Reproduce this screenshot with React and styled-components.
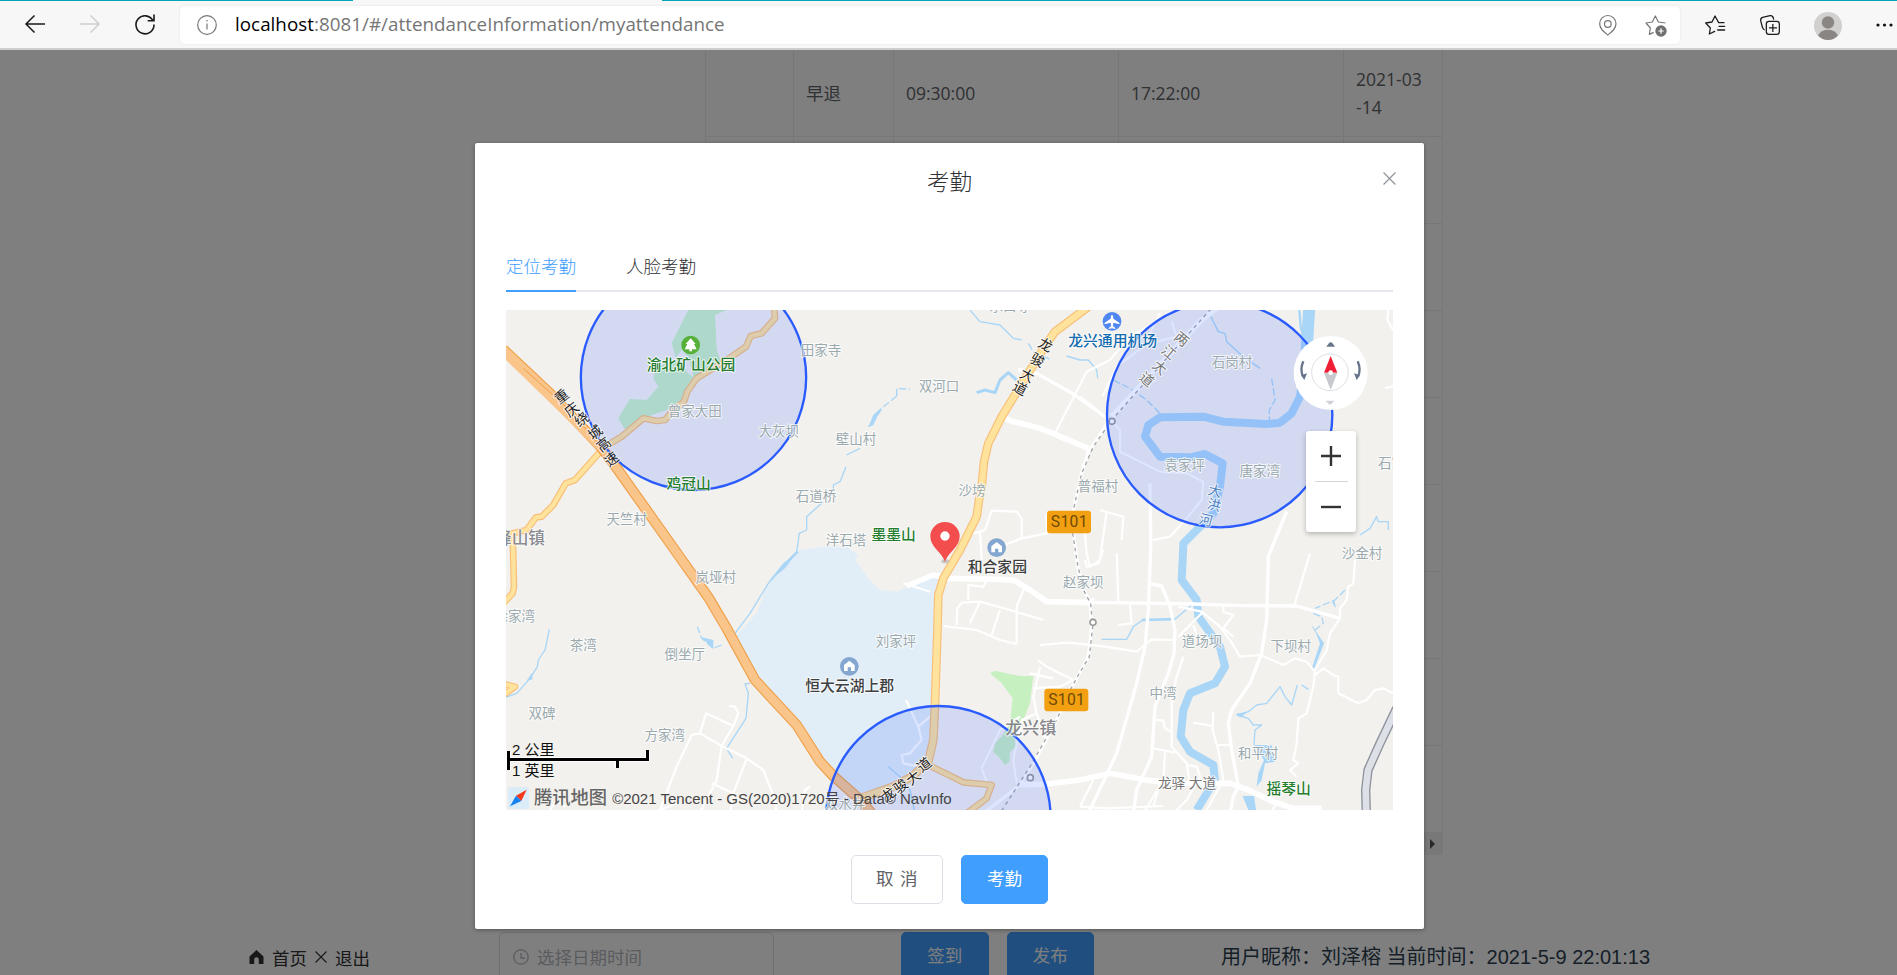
import React from "react";
import styled, { createGlobalStyle } from "styled-components";

const cjk = `"Noto Sans CJK SC", sans-serif`;
const ui = `"Open Sans", ${cjk}`;

const GlobalStyle = createGlobalStyle`
  * { box-sizing: border-box; }
  body { margin: 0; overflow: hidden; background: #fff; font-family: ${ui}; }
`;

const Window = styled.div`
  width: 100vw;
  height: 100vh;
  display: flex;
  flex-direction: column;
  overflow: hidden;
`;

/* ---------- browser bar ---------- */

const TabStrip = styled.div`
  height: 1px;
  display: flex;
  background: #00a5b5;
`;
const ActiveTab = styled.div`
  width: 309px;
  margin-left: 353px;
  background: #f7f7f7;
`;
const BrowserBar = styled.div`
  height: 49px;
  flex: none;
  display: flex;
  align-items: flex-start;
  padding: 5px 0 0 25px;
  background: #f7f7f7;
  border-bottom: 2px solid #cfcfcf;
`;
const BarIcon = styled.svg`
  flex: none;
  width: ${(p) => p.$w}px;
  height: ${(p) => p.$h}px;
  margin: ${(p) => p.$top}px ${(p) => p.$right || 0}px 0 ${(p) => p.$left || 0}px;
  fill: none;
  stroke: ${(p) => p.$color || "#1b1b1b"};
  overflow: visible;
`;
const AddressBar = styled.div`
  width: 1500px;
  height: 38px;
  flex: none;
  margin-left: 25px;
  padding-left: 17px;
  display: flex;
  background: #fff;
  border-radius: 5px;
  box-shadow: 0 0 3px rgba(0, 0, 0, 0.08);
`;
const Url = styled.div`
  flex: 1;
  margin-left: 18px;
  font-size: 18.8px;
  line-height: 37px;
  letter-spacing: 0.03px;
  color: #757575;
  white-space: nowrap;
  b { font-weight: 400; color: #000; }
`;

/* ---------- page behind the dialog ---------- */

const Page = styled.main`
  flex: 1;
  position: relative;
  overflow: hidden;
`;
const Table = styled.div`
  width: 738px;
  height: 804px;
  margin-left: 705px;
  color: #606266;
  border-left: 1px solid #ebeef5;
`;
const Row = styled.div`
  height: 87px;
  display: grid;
  grid-template-columns: 88px 100px 225px 225px 99px;
  border-bottom: 1px solid #ebeef5;
`;
const Cell = styled.div`
  display: flex;
  align-items: center;
  padding: 0 12px;
  font-size: 17.5px;
  line-height: 28px;
  border-right: 1px solid #ebeef5;
`;
const ScrollTrack = styled.div`
  height: 22px;
  display: flex;
  align-items: center;
  justify-content: flex-end;
  padding-right: 8px;
  background: #f1f1f1;
`;
const ScrollArrow = styled.i`
  border: 5px solid transparent;
  border-left-color: #505050;
  border-right: 0;
`;
const Footer = styled.div`
  height: 52px;
  margin-top: 78px;
  padding-left: 249px;
  display: flex;
  align-items: flex-start;
`;
const FooterNav = styled.nav`
  width: 250px;
  height: 50px;
  display: flex;
  align-items: center;
  font-size: 17.5px;
  color: #303133;
  svg { margin-right: 8px; }
  span { margin-right: 8px; }
`;
const DateInput = styled.div`
  width: 275px;
  height: 49px;
  display: flex;
  align-items: center;
  gap: 8px;
  padding-left: 13px;
  border: 1px solid #dcdfe6;
  border-radius: 5px;
  font-size: 17.5px;
  color: #b4b8bf;
`;
const Button = styled.button`
  width: ${(p) => p.$w || 87.5}px;
  height: 49px;
  margin: 0 0 0 ${(p) => p.$gap || 0}px;
  padding: 0 0 1px;
  border: 1px solid ${(p) => (p.$plain ? "#dcdfe6" : "#409eff")};
  border-radius: 5px;
  background: ${(p) => (p.$plain ? "#fff" : "#409eff")};
  color: ${(p) => (p.$plain ? "#606266" : "#fff")};
  font: 17.5px/1 ${ui};
  word-spacing: 2px;
`;
const UserInfo = styled.div`
  margin-left: 127px;
  line-height: 51px;
  font-family: "Liberation Sans", ${cjk};
  font-size: 20px;
  color: #2c3e50;
  white-space: nowrap;
`;
const Overlay = styled.div`
  position: absolute;
  inset: 0;
  display: flex;
  justify-content: center;
  align-items: flex-start;
  padding: 93px 0 0 2px;
  background: rgba(0, 0, 0, 0.5);
`;

/* ---------- dialog ---------- */

const Dialog = styled.section`
  width: 949px;
  height: 786px;
  padding: 0 31px;
  display: flex;
  flex-direction: column;
  background: #fff;
  border-radius: 2px;
  box-shadow: 0 1px 4px rgba(0, 0, 0, 0.35);
`;
const DialogHead = styled.header`
  height: 95px;
  flex: none;
  display: grid;
  grid-template-columns: 1fr auto 1fr;
  padding-top: 25px;
  font-size: 22.5px;
  font-weight: 300;
  line-height: 28px;
  color: #303133;
  svg { justify-self: end; margin: 4px -3px 0 0; }
`;
const Tabs = styled.div`
  height: 54px;
  flex: none;
  display: flex;
  gap: 50px;
  border-bottom: 2px solid #e4e7ed;
`;
const Tab = styled.div`
  height: 54px;
  font-size: 17.5px;
  font-weight: 300;
  line-height: 56px;
  color: ${(p) => (p.$active ? "#409eff" : "#303133")};
  border-bottom: 2px solid ${(p) => (p.$active ? "#409eff" : "transparent")};
`;
const DialogFoot = styled.footer`
  display: flex;
  justify-content: center;
  padding-top: 45px;
`;

/* ---------- map ---------- */

const MapBox = styled.div`
  position: relative;
  width: 887px;
  height: 500px;
  flex: none;
  margin-top: 18px;
  overflow: hidden;
  background: #f2f1ed;
`;
const MapSvg = styled.svg`
  display: block;
  width: 887px;
  height: 500px;
  text { font-family: "Open Sans", ${cjk}; }
`;
const SignText = styled.text`
  && { font-family: Roboto, "Liberation Sans", sans-serif; }
`;
const Compass = styled.svg`
  position: absolute;
  left: 787px;
  top: 25px;
  width: 76px;
  height: 76px;
`;
const ZoomControl = styled.div`
  position: absolute;
  left: 800px;
  top: 121px;
  width: 50px;
  height: 101px;
  padding: 0 8px;
  display: flex;
  flex-direction: column;
  align-items: center;
  background: #fff;
  border-radius: 3px;
  box-shadow: 0 2px 5px rgba(0, 0, 0, 0.25);
  svg { height: 50px; width: 20px; stroke: #333; stroke-width: 2.4; }
  hr { width: 33px; margin: 0; border: 0; border-top: 1px solid #d5d5d5; }
`;
const ScaleBar = styled.div`
  position: absolute;
  left: 0;
  top: 429px;
  width: 144px;
  font: 15px/21px "Liberation Sans", ${cjk};
  color: #111;
  span { display: block; height: 21px; padding-left: 6px; }
  svg { position: absolute; left: 0; top: 10px; }
`;
const MapCredit = styled.div`
  position: absolute;
  left: 2px;
  bottom: 0;
  height: 25px;
  display: flex;
  align-items: center;
  font: 15px "Liberation Sans", ${cjk};
  color: #444;
  white-space: nowrap;
  b { margin: 0 5px; font-weight: 500; font-size: 18.3px; line-height: 24px; color: #666; }
`;

const places = [
  [584, 334, "曾家大田"], [836, 394, "大灰坝"], [380, 657, "天竺村"], [948, 590, "石道桥"],
  [963, 151, "田家寺"], [1317, 260, "双河口"], [1068, 417, "壁山村"], [1416, 571, "沙塝"],
  [1038, 720, "洋石塔"], [1794, 560, "普福村"], [2196, 188, "石岗村"], [2054, 497, "袁家坪"],
  [2279, 514, "唐家湾"], [2586, 759, "沙金村"], [1529, 18, "水口寺"], [647, 833, "岚垭村"],
  [44, 950, "徐家湾"], [250, 1036, "茶湾"], [554, 1062, "倒坐厅"], [126, 1240, "双碑"],
  [494, 1306, "方家湾"], [1188, 1025, "刘家坪"], [1750, 848, "赵家坝"], [2106, 1024, "道场坝"],
  [2372, 1040, "下坝村"], [1989, 1181, "中湾"], [2274, 1359, "和平村"], [2695, 490, "石家坡"],
  [1035, 1512, "双水井"],
];
const hills = [
  [573, 194, "渝北矿山公园"], [566, 551, "鸡冠山"], [1181, 704, "墨墨山"], [2366, 1465, "摇琴山"],
];
const estates = [[1049, 1158, "恒大云湖上郡"], [1492, 801, "和合家园"]];
const estatePins = [[1048, 1099], [1490, 743]];
const signs = [[1641, 632], [1633, 1166]];

const roadNames = [
  { angle: -38, color: "#222", size: 42, chars: [["重", 185, 289], ["庆", 215, 328], ["绕", 245, 357], ["城", 285, 397], ["高", 311, 433], ["速", 334, 477]] },
  { angle: 28, color: "#222", size: 42, chars: [["龙", 1637, 134], ["骏", 1613, 180], ["大", 1582, 226], ["道", 1560, 265]] },
  { angle: 40, color: "#777", size: 42, chars: [["两", 2045, 117], ["江", 2007, 157], ["大", 1980, 202], ["道", 1941, 238]] },
  { angle: -38, color: "#222", size: 42, chars: [["龙", 1165, 1483], ["骏", 1202, 1458], ["大", 1240, 1433], ["道", 1272, 1394]] },
  { angle: 14, color: "#4d7fc0", size: 41, chars: [["大", 2145, 572], ["洪", 2142, 614], ["河", 2118, 659]] },
];

const wideRoads = [
  "M1500,345 L1530,362 L1620,385 L1665,403 L1765,445",
  "M1220,858 L1300,825 L1340,835 L1500,838 L1545,842 L1590,870 L1640,905 L1780,908",
  "M1560,1455 L1640,1452 L1740,1440 L1830,1420 L1950,1442 L2060,1450 L2190,1450 L2245,1470 L2320,1505 L2380,1525 L2465,1525",
];
const midRoads = [
  "M1555,208 L1610,220 L1720,282 L1815,350",
  "M1780,895 L1775,908 L1840,908 L2080,912 L2200,916 L2390,918 L2520,955",
  "M1830,355 L1790,420 L1765,455 L1745,520 L1720,630 L1720,700 L1732,790 L1745,860 L1770,905 L1775,980 L1765,1070 L1735,1125 L1700,1190 L1670,1260 L1600,1390 L1560,1455 L1450,1540",
  "M1950,550 L1952,700 L1952,750 L1945,930 L1935,1040 L1910,1150 L1850,1360 L1765,1540",
  "M1945,850 L1985,858 L2010,920 L2025,990 L2022,1060 L2005,1120 L1965,1220 L1955,1370 L1910,1470 L1900,1540",
  "M2360,635 L2325,720 L2305,770 L2300,960 L2285,1060 L2250,1150 L2195,1230 L2185,1270 L2195,1350 L2215,1460 L2200,1490 L2190,1540",
];
const smallRoads = [
  "M1665,400 L1760,215 L1830,180 L1890,110 L1960,70",
  "M1808,288 L1850,200 L1930,140 L1980,40",
  "M1740,290 L1830,360 L1860,390 L1860,455 L1980,515 L2060,520 L2110,545 L2105,600 L2060,655 L2010,710 L1960,720",
  "M2015,65 L2030,110 L1950,130",
  "M1800,630 L1870,650 L1865,720 M1820,635 L1800,780 L1770,800 L1760,760 L1750,640",
  "M1440,695 L1455,690 L1475,632 L1550,635 L1565,655 L1565,715 L1500,740 M1565,715 L1640,700 L1640,640",
  "M1445,780 L1440,695 L1420,700",
  "M1330,978 L1430,990 L1500,1020 L1550,1032 M1370,975 L1372,925 L1385,908 L1440,905 L1530,930 L1630,960 M1440,905 L1410,970 M1500,930 L1475,1005 M1550,1030 L1550,920 L1575,860 M1405,900 L1405,855 L1450,860 L1465,830",
  "M1210,850 L1290,875 M1240,850 L1320,820",
  "M1620,1035 L1700,1028 L1780,1035 L1830,1042 L1910,1055 M1910,1055 L1955,1018 L2025,1020",
  "M1613,1080 L1640,1100 L1720,1140 M1620,1100 L1600,1190 L1610,1240 L1640,1330 M1590,1120 L1660,1135 M1600,1165 L1680,1160 L1720,1140",
  "M1610,1240 L1565,1260 L1540,1380 L1550,1450 M1445,1405 L1500,1290 L1560,1250 M1445,1405 L1460,1445",
  "M1218,1200 L1255,1280 L1290,1250 M1255,1280 L1265,1320 L1230,1360 L1205,1365 L1210,1390 L1260,1400",
  "M530,1510 L480,1530 L530,1400 L575,1305 L600,1300 L665,1338 L740,1375 L790,1410 L825,1500 L830,1540 M600,1300 L618,1240 L700,1278 L665,1338 L650,1440 L600,1540 M700,1278 L715,1240 L705,1220 L688,1218 M635,1450 L700,1480 L740,1375 M700,1480 L690,1540",
  "M150,1530 L170,1500 L195,1520 M905,1540 L915,1470 L930,1460",
  "M1850,760 L1855,905 M1890,910 L1895,970 L1855,975 M1755,780 L1760,800 L1795,790 L1810,750",
  "M2035,920 L2105,935 L2160,980 L2200,1035 M2035,1010 L2105,940 M2170,915 L2170,935 L2200,945 L2170,985 L2200,1010 M2080,975 L2090,1005",
  "M2190,1020 L2220,1070 L2280,1065 L2350,1095 L2385,1075 L2420,1085 L2445,1115",
  "M2430,760 L2380,925 M2565,780 L2560,850 L2545,860 L2540,900 L2520,925 L2520,955 L2490,1000 L2480,1050 L2445,1110 L2440,1160 L2420,1240 L2395,1255 L2390,1330 L2380,1380 L2395,1390 L2370,1410 L2390,1430",
  "M2445,1125 L2470,1105 L2500,1125 L2515,1130 L2515,1180 L2575,1210 L2600,1200 L2625,1170 L2650,1165 L2679,1180",
  "M2050,1070 L2030,1130 L2015,1200 L2015,1340 L2060,1390 L2070,1450 M1960,1345 L2025,1358 M1960,1258 L1990,1262 L1995,1285 L2015,1295 M1995,1358 L1990,1440 L1930,1540",
  "M2140,1235 L2138,1290 L2155,1350 L2170,1440 L2120,1530 M2080,1268 L2138,1278 M2155,1335 L2195,1335 M2060,1395 L2090,1400 L2100,1430 L2060,1500 L2020,1540",
  "M1740,1520 L1820,1525 L1990,1518 M1980,1450 L1960,1520 M2330,1510 L2310,1540",
  "M2665,30 L2662,60 L2679,90 M2655,265 L2679,258 M1780,1440 L1740,1520",
];
const streams = [
  "M1410,30 L1440,65 L1500,75 L1540,115 L1565,120", "M1585,130 L1600,155 L1650,178",
  "M1700,168 L1740,180 L1765,180 L1790,210 L1793,235",
  "M1190,288 L1190,265 L1230,268", "M1190,288 L1145,325 L1130,350 L1105,380",
  "M1080,445 L1040,465 M1038,500 L1020,545 L1000,555 L1000,570", "M970,605 L920,650 L920,690 L898,700 L890,755 L865,780",
  "M1840,240 L1890,265 L1940,300 L1985,345", "M2130,45 L2155,95 L2175,100 L2180,125 L2230,170 L2280,205",
  "M2315,235 L2325,300 L2308,330 L2308,360", "M895,755 L850,800 L805,850 L750,940 L705,1000",
  "M148,988 L135,1050 L115,1080 L112,1100 L90,1135 L50,1180 L18,1192",
  "M665,1035 L640,1045 L605,1015 L592,980", "M750,1150 L735,1152 L745,1180 L738,1255 L680,1345 L698,1375",
  "M1805,1018 L1880,1018 L1900,980 L1925,962 L2025,958 L2075,915",
  "M2440,940 L2465,950 L2470,970 L2445,990", "M2535,870 L2505,900 L2445,925",
  "M2210,1245 L2245,1235 L2270,1215 L2300,1210 L2340,1160 L2355,1190 L2375,1215 L2392,1155 M2405,1155 L2425,1168",
  "M2210,1245 L2245,1255 L2260,1275 L2285,1275 L2265,1290 L2262,1335",
  "M2580,705 L2610,685 L2630,650 L2635,665 L2665,665 L2665,690", "M2500,900 L2505,920 M1165,1400 L1200,1430 L1230,1470 L1245,1540",
];
const lanes = [
  "M822,20 L825,55 L785,100 L752,108 L738,140 L680,180 L590,235 L562,275 L552,305 L520,330 L495,360 L470,363 L430,355 L365,410 L320,437",
  "M305,450 L225,540 L197,550 L160,615 L125,650 L108,652 L80,690 L10,707",
  "M38,700 L42,860 L38,880 L10,910",
  "M10,1152 L45,1160 L10,1185",
  "M1285,1395 L1390,1447 L1475,1455 L1460,1495 L1400,1540",
];
const mainRoad =
  "M1765,20 L1665,95 L1635,138 L1560,260 L1505,350 L1465,430 L1452,485 L1445,560 L1437,600 L1430,650 L1380,750 L1330,835 L1315,885 L1312,1000 L1305,1210 L1300,1320 L1285,1385 L1235,1430 L1180,1460 L1080,1495";
const highway =
  "M10,148 L150,280 L300,438 L340,490 L535,765 L625,892 L680,985 L765,1140 L890,1275 L960,1385 L1000,1428 L1070,1490 L1115,1540";
const river =
  "M2420,140 L2400,290 L2375,340 L2340,368 L2300,372 L2170,365 L2110,350 L1980,352 L1945,375 L1935,410 L1980,470 L2070,472 L2115,462 L2168,490 L2160,560 L2140,640 L2050,730 L2048,780 L2045,840 L2090,900 L2095,950 L2160,1040 L2175,1100 L2145,1150 L2070,1180 L2050,1230 L2042,1310 L2070,1355 L2140,1395 L2145,1440 L2090,1530";

const Label = ({ x, y, size = 40.5, color = "#9aa9ae", weight = 400, turn, children }) => (
  <text
    x={x} y={y + size * 0.37} fontSize={size} fontWeight={weight} fill={color} textAnchor="middle"
    stroke="#fff" strokeOpacity=".75" strokeWidth="6" strokeLinejoin="round" paintOrder="stroke"
    transform={turn ? `rotate(${turn} ${x} ${y})` : undefined}
  >
    {children}
  </text>
);

const Cased = ({ d, width, fill, edge }) => (
  <>
    <path d={d} stroke={edge} strokeWidth={width + 7} />
    <path d={d} stroke={fill} strokeWidth={width} />
  </>
);

function AttendanceMap() {
  return (
    <MapSvg viewBox="18 30 2661 1500">
      <path fill="#e2eef7" d="M705,1010 L770,940 L800,860 L850,790 L900,750 L975,740 L1040,740 L1075,765 L1065,778 L1105,835 L1140,870 L1190,875 L1220,860 L1320,825 L1312,1000 L1305,1210 L1300,1320 L1285,1385 L1180,1460 L1080,1480 L960,1380 L890,1275 L765,1140 Z" />
      <path fill="#c7f0c1" d="M565,30 L680,30 L645,45 L650,150 L665,190 L640,215 L585,235 L555,290 L500,330 L440,350 L375,388 L355,355 L390,297 L440,300 L475,260 L460,235 L470,200 L530,180 L515,130 L535,90 Z" />
      <path fill="#f2f1ed" d="M530,168 L545,150 L565,172 L582,235 L560,215 Z" />
      <path fill="#c7f0c1" d="M1470,1120 L1485,1112 L1530,1122 L1560,1128 L1600,1128 L1590,1210 L1570,1260 L1540,1300 L1548,1340 L1530,1355 L1528,1385 L1515,1395 L1500,1375 L1480,1355 L1485,1330 L1505,1310 L1530,1270 L1538,1195 L1505,1150 Z" />
      <g fill="#a9d6f7">
        <path d="M1105,382 L1120,345 L1145,322 L1120,375 Z M805,845 L850,790 L890,758 L855,805 Z M605,1012 L640,1020 L640,1048 Z" />
        <path d="M2448,1000 L2438,985 L2435,975 L2472,1030 L2442,1108 L2436,1104 L2460,1030 Z M2228,1488 L2262,1488 L2268,1530 L2245,1530 Z" />
        <path d="M2262,1335 L2315,1335 L2325,1385 L2295,1390 L2285,1440 L2270,1460 L2275,1420 L2292,1380 Z M2210,1240 L2240,1240 L2220,1252 Z" />
        <path d="M80,1142 L95,1120 L98,1138 Z M2495,905 L2502,905 L2508,924 Z" />
      </g>
      <g fill="none" stroke="#a9d6f7" strokeLinejoin="round">
        {streams.map((d) => <path key={d} d={d} strokeWidth="4" strokeDasharray={d.length < 45 ? "22 8" : undefined} />)}
        <path d="M1430,278 L1455,270 L1485,278 L1500,240 L1525,218 L1550,240" strokeWidth="9" />
        <path d="M2428,20 L2420,150" strokeWidth="36" />
        <path d="M2398,30 L2402,80 L2415,130" strokeWidth="7" />
        <path d={river} strokeWidth="24" />
        <path d="M1925,960 L2025,957" strokeWidth="7" />
      </g>
      <g fill="none" stroke="#fff" strokeLinejoin="round">
        {wideRoads.map((d) => <path key={d} d={d} strokeWidth="17" />)}
        {midRoads.map((d) => <path key={d} d={d} strokeWidth="10" />)}
        {smallRoads.map((d) => <path key={d} d={d} strokeWidth="6.5" />)}
        <path d="M2180,0 L2100,65 L1835,350" strokeWidth="16" />
        <path d="M2180,-20 L2125,35 L1835,360 L1780,440 L1745,520 L1720,630 L1718,700 L1732,790 L1750,870 L1772,910 L1778,980 L1768,1070 L1735,1125 L1700,1190 L1670,1260 L1590,1400 L1500,1540" stroke="#a2a4aa" strokeWidth="4" strokeDasharray="11 11" />
        <path d="M2690,1225 L2640,1330 L2604,1410 L2597,1470 L2599,1540" stroke="#8d929d" strokeWidth="28" />
        <path d="M2690,1225 L2640,1330 L2604,1410 L2597,1470 L2599,1540" stroke="#dde0e6" strokeWidth="20" />
      </g>
      <g fill="none" strokeLinejoin="round">
        {lanes.map((d) => <Cased key={d} d={d} width={13} fill="#ffe39c" edge="#f7bf7a" />)}
        <Cased d={mainRoad} width={19} fill="#ffe39c" edge="#f7bf7a" />
        <Cased d={highway} width={25} fill="#fac58b" edge="#efa14a" />
        <path d="M10,154 L150,290 L310,448" stroke="#fac58b" strokeWidth="26" />
        <path d="M70,205 L200,322 L290,425" stroke="#efa14a" strokeWidth="3" />
      </g>
      <g fill="#fff" stroke="#9b9b9b" strokeWidth="5">
        <circle cx="1779" cy="967" r="9" />
        <circle cx="1591" cy="1433" r="9" />
        <circle cx="1836" cy="364" r="9" />
      </g>
      <g fill="#295bff" fillOpacity=".16" stroke="#295bff" strokeWidth="7">
        <circle cx="580.5" cy="232" r="338" />
        <circle cx="2159" cy="344" r="338" />
        <circle cx="1315" cy="1555" r="337" />
      </g>

      {places.map(([x, y, name]) => <Label key={name} x={x} y={y - 1}>{name}</Label>)}
      <Label x={60} y={712} size={50} color="#8a8b91" weight={500}>峰山镇</Label>
      <Label x={1592} y={1283} size={51} color="#86878c" weight={500}>龙兴镇</Label>
      <Label x={2061} y={1448} size={41} color="#777">龙驿 大道</Label>
      {hills.map(([x, y, name]) => <Label key={name} x={x} y={y} size={44.3} weight={500} color="#237d2d">{name}</Label>)}
      {estates.map(([x, y, name]) => <Label key={name} x={x} y={y} size={44.5} weight={500} color="#3f3f3f">{name}</Label>)}
      <Label x={1838} y={122} size={44.5} weight={500} color="#136cb0">龙兴通用机场</Label>
      {roadNames.map((r) => r.chars.map(([c, x, y]) => (
        <Label key={c + x} x={x} y={y} size={r.size} color={r.color} turn={r.angle}>{c}</Label>
      )))}

      <circle cx="572" cy="135" r="28" fill="#57b038" />
      <path d="M572,115 L587,132 L582,132 L590,148 H576 V154 H568 V148 H554 L562,132 L557,132 Z" fill="#fff" />
      <circle cx="1836" cy="64" r="28" fill="#4f86f0" />
      <path d="M1836,44 Q1840,46 1840,56 L1858,68 V73 L1840,68 L1839,78 L1846,84 V87 L1836,85 L1826,87 V84 L1833,78 L1832,68 L1814,73 V68 L1832,56 Q1832,46 1836,44 Z" fill="#fff" />
      {estatePins.map(([x, y]) => (
        <g key={x} transform={`translate(${x} ${y})`}>
          <circle r="28" fill="#83a7d0" />
          <path d="M0,-17 L16,-4 V14 H5 V3 H-5 V14 H-16 V-4 Z" fill="#fff" />
        </g>
      ))}
      {signs.map(([x, y]) => (
        <g key={x}>
          <rect x={x} y={y} width="132" height="68" rx="9" fill="#f2a012" />
          <SignText x={x + 67} y={y + 50} fontSize="47" letterSpacing="1" textAnchor="middle" fill="#6e4a05">S101</SignText>
        </g>
      ))}
      <ellipse cx="1336" cy="784" rx="12" ry="6" fill="#c9c5c0" />
      <path d="M1335,785 C1322,752 1291,742 1291,709 A44,43 0 0 1 1379,709 C1379,742 1348,752 1335,785 Z" fill="#f34d4e" />
      <circle cx="1335" cy="708" r="14" fill="#fff" />
    </MapSvg>
  );
}

const CompassControl = () => (
  <Compass viewBox="640 104 228 228">
    <circle cx="753" cy="218" r="111" fill="#fff" />
    <circle cx="751" cy="216" r="55" fill="#fff" stroke="#dfe1e4" strokeWidth="3" />
    <path d="M753,167 L773,217 H733 Z" fill="#f01d35" />
    <path d="M733,217 H773 L753,268 Z" fill="#c6c9cd" />
    <circle cx="753" cy="217" r="7" fill="#fff" />
    <path d="M740,139 L748,128 Q753,124 758,128 L766,139 Z" fill="#66758a" />
    <path d="M738,301 H764 L755,311 Q751,314 747,311 Z" fill="#cfd2d6" />
    <g fill="none" stroke="#66758a" strokeWidth="7">
      <path d="M671,183 Q660,208 670,228" />
      <path d="M834,183 Q845,208 835,228" />
    </g>
    <path d="M664,225 L682,219 L674,239 Z M841,225 L823,219 L831,239 Z" fill="#66758a" />
  </Compass>
);

const Cross = ({ size, color }) => (
  <svg width={size} height={size} viewBox="0 0 12 12" stroke={color} strokeWidth="1.1" fill="none">
    <path d="M.5.5 11.5 11.5M11.5.5.5 11.5" />
  </svg>
);

function BrowserChrome() {
  return (
    <>
      <TabStrip><ActiveTab /></TabStrip>
      <BrowserBar>
        <BarIcon $w={20} $h={18} $top={9} viewBox="0 0 20 18" strokeWidth="1.5"><path d="M20 9H1M9.5.5 1 9l8.500 8.500" /></BarIcon>
        <BarIcon $w={20} $h={18} $top={9} $left={35} $color="#cfcfcf" viewBox="0 0 20 18" strokeWidth="1.5"><path d="M0 9h19M10.500.5 19 9l-8.500 8.500" /></BarIcon>
        <BarIcon $w={20} $h={20} $top={8} $left={35} viewBox="0 0 20 20" strokeWidth="1.6"><path d="M17.800 6.300A9 9 0 1 0 19 10.500M19 .5v6.300h-6.300" /></BarIcon>
        <AddressBar>
          <BarIcon $w={20} $h={20} $top={9} $color="#777" viewBox="0 0 20 20" strokeWidth="1.2">
            <circle cx="10" cy="10" r="9.300" /><path d="M10 8.500v6M10 5v1.600" />
          </BarIcon>
          <Url><b>localhost</b>:8081/#/attendanceInformation/myattendance</Url>
          <BarIcon $w={18} $h={21} $top={9} $color="#777" viewBox="596 43 54 63" strokeWidth="3.600">
            <path d="M622.500 103 C610 93 598 84 598 69 A24.500 24.500 0 0 1 647 69 C647 84 635 93 622.500 103Z" /><circle cx="622.500" cy="70" r="10" />
          </BarIcon>
          <BarIcon $w={22} $h={22} $top={9} $left={28} $right={13} $color="#777" viewBox="734 43 66 66" strokeWidth="3.600" strokeLinejoin="round">
            <path d="M795 67 L774 64 L765 46 L756 64 L737 67 L750 82 L747 101 L760 95" />
            <circle cx="782" cy="91" r="17" fill="#6f6f6f" stroke="none" /><path d="M782 83v16M774 91h16" stroke="#fff" />
          </BarIcon>
        </AddressBar>
        <BarIcon $w={20} $h={20} $top={9} $left={25} viewBox="915 44 60 60" strokeWidth="3.800" strokeLinejoin="round" strokeLinecap="round">
          <path d="M972 67 H956 L945 47 L936 65 L917 68 L931 83 L928 101 L944 93 M957 78h17M953 89h21" />
        </BarIcon>
        <BarIcon $w={20} $h={20} $top={9} $left={35} viewBox="1080 44 60 60" strokeWidth="3.800" strokeLinejoin="round">
          <rect x="1099" y="63" width="39" height="39" rx="8" /><path d="M1118.500 71v24M1107 82.500h24M1094 89 Q1089 87 1087 80 L1082 61 Q1081 53 1088 51 L1110 46 Q1118 45 1120 53 L1121 58" />
        </BarIcon>
        <BarIcon $w={28} $h={28} $top={6} $left={34} $color="none" viewBox="0 0 28 28">
          <circle cx="14" cy="14" r="14" fill="#d2d0ce" /><circle cx="14" cy="10.500" r="6.200" fill="#8a8683" />
          <path d="M4 23.500 Q7 17.800 14 17.800 T24 23.500 Q19.500 28 14 28 T4 23.500Z" fill="#8a8683" />
        </BarIcon>
        <BarIcon $w={16} $h={4} $top={17} $left={34} $color="none" viewBox="0 0 16 4">
          <g fill="#111"><circle cx="2" cy="2" r="1.600" /><circle cx="8.500" cy="2" r="1.600" /><circle cx="15" cy="2" r="1.600" /></g>
        </BarIcon>
      </BrowserBar>
    </>
  );
}

const records = [
  ["", "早退", "09:30:00", "17:22:00", "2021-03 -14"],
  ...Array.from({ length: 8 }, () => ["", "", "", "", ""]),
];

export default function App() {
  return (
    <Window>
      <GlobalStyle />
      <BrowserChrome />
      <Page>
        <Table>
          {records.map((row, i) => (
            <Row key={i}>{row.map((v, j) => <Cell key={j}>{v}</Cell>)}</Row>
          ))}
          <ScrollTrack><ScrollArrow /></ScrollTrack>
        </Table>
        <Footer>
          <FooterNav>
            <svg width="15" height="14" viewBox="0 0 15 14" fill="#303133"><path d="M7.500 0 14.500 6.500V14H9.800V9.500a2.300 2.300 0 0 0-4.600 0V14H.5V6.500Z" /></svg>
            <span>首页</span>
            <Cross size={12} color="#303133" />
            <span>退出</span>
          </FooterNav>
          <DateInput>
            <svg width="16" height="16" viewBox="0 0 16 16" fill="none" stroke="#b4b8bf" strokeWidth="1.300"><circle cx="8" cy="8" r="7.200" /><path d="M8 4v5h4" /></svg>
            选择日期时间
          </DateInput>
          <Button $gap={127}>签到</Button>
          <Button $gap={18}>发布</Button>
          <UserInfo>用户昵称：刘泽榕 当前时间：2021-5-9 22:01:13</UserInfo>
        </Footer>
        <Overlay>
          <Dialog>
            <DialogHead>
              <i />
              <span>考勤</span>
              <Cross size={13} color="#909399" />
            </DialogHead>
            <Tabs>
              <Tab $active>定位考勤</Tab>
              <Tab>人脸考勤</Tab>
            </Tabs>
            <MapBox>
              <AttendanceMap />
              <CompassControl />
              <ZoomControl>
                <svg viewBox="0 0 20 50"><path d="M0 25h20M10 15v20" /></svg>
                <hr />
                <svg viewBox="0 0 20 50"><path d="M0 25h20" /></svg>
              </ZoomControl>
              <ScaleBar>
                <span>2 公里</span>
                <span>1 英里</span>
                <svg width="144" height="24" viewBox="0 0 144 24" fill="none" stroke="#fff" strokeWidth="5"><path d="M2.500 3v18M2.500 10.500H141.500V2M111 10v9" /><path d="M2.500 2v19M2.500 10.500H141.500V1M111.500 10v9" stroke="#000" strokeWidth="3" /></svg>
              </ScaleBar>
              <MapCredit>
                <svg width="21" height="22" viewBox="0 0 63 66"><rect width="63" height="66" rx="8" fill="#d9ecf8" /><path d="M56 8 40 42 24 26Z" fill="#f5391d" /><path d="M6 58 24 26 40 42Z" fill="#1482f2" /></svg>
                <b>腾讯地图</b>
                <span>©2021 Tencent - GS(2020)1720号 - Data© NavInfo</span>
              </MapCredit>
            </MapBox>
            <DialogFoot>
              <Button $plain $w={92}>取 消</Button>
              <Button $gap={18}>考勤</Button>
            </DialogFoot>
          </Dialog>
        </Overlay>
      </Page>
    </Window>
  );
}
